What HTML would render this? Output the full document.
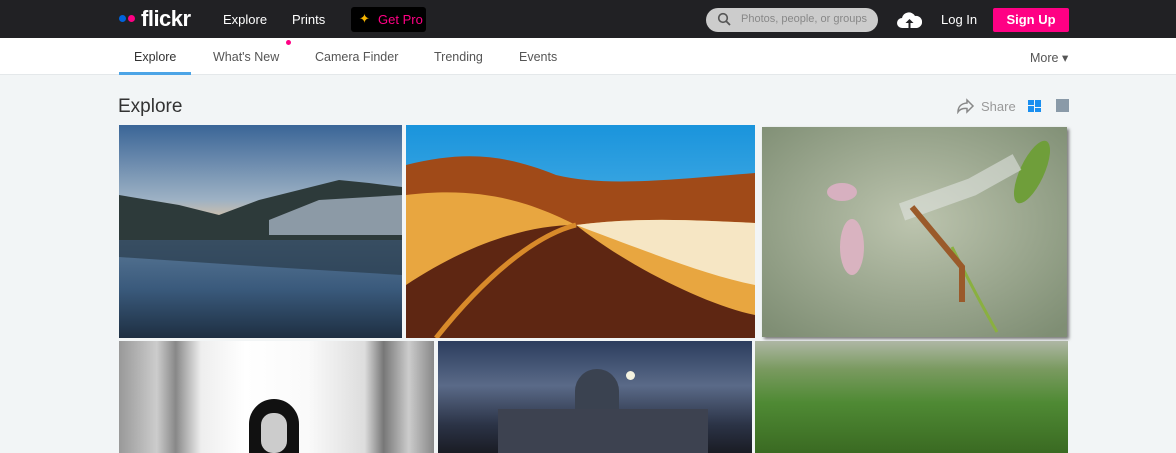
<!DOCTYPE html>
<html><head><style>
*{margin:0;padding:0;box-sizing:border-box}
body{width:1176px;height:453px;overflow:hidden;background:#f2f5f6;font-family:"Liberation Sans",sans-serif;position:relative}
.top{position:absolute;left:0;top:0;width:1176px;height:38px;background:#212124}
.sub{position:absolute;left:0;top:38px;width:1176px;height:37px;background:#fff;border-bottom:1px solid #e4e8ea}
.a{position:absolute;white-space:nowrap}
.ph{position:absolute;overflow:hidden}
</style></head><body>
<div class="top">
 <div class="a" style="left:119px;top:15px;width:7px;height:7px;border-radius:50%;background:#0063dc"></div>
 <div class="a" style="left:128px;top:15px;width:7px;height:7px;border-radius:50%;background:#ff0084"></div>
 <div class="a" style="left:141px;top:6px;color:#fff;font-weight:bold;font-size:22px;letter-spacing:-0.5px">flickr</div>
 <div class="a" style="left:223px;top:12px;color:#fff;font-size:13px">Explore</div>
 <div class="a" style="left:292px;top:12px;color:#fff;font-size:13px">Prints</div>
 <div class="a" style="left:351px;top:7px;width:75px;height:25px;background:#000;border-radius:3px"></div>
 <div class="a" style="left:359px;top:11px;color:#f5b400;font-size:13px">✦</div>
 <div class="a" style="left:378px;top:12px;color:#ff0084;font-size:13px">Get Pro</div>
 <div class="a" style="left:706px;top:8px;width:172px;height:24px;background:#ccc;border-radius:12px"></div>
 <svg class="a" style="left:717px;top:12px" width="14" height="14" viewBox="0 0 14 14"><circle cx="6" cy="6" r="4.3" fill="none" stroke="#555" stroke-width="1.6"/><path d="M9 9l4 4" stroke="#555" stroke-width="1.8"/></svg>
 <div class="a" style="left:741px;top:13px;color:#888;font-size:11px">Photos, people, or groups</div>
 <svg class="a" style="left:897px;top:10px" width="25" height="20" viewBox="0 0 25 20"><path d="M5 18a5 5 0 0 1 0-10 7 7 0 0 1 13-2 6 6 0 0 1 2 12z" fill="#fff"/><path d="M12.5 9l-4 4h3v5h2v-5h3z" fill="#212124"/></svg>
 <div class="a" style="left:941px;top:12px;color:#fff;font-size:13px">Log In</div>
 <div class="a" style="left:993px;top:8px;width:76px;height:24px;background:#ff0084;border-radius:2px;color:#fff;font-size:13px;font-weight:bold;text-align:center;line-height:24px">Sign Up</div>
</div>
<div class="sub">
 <div class="a" style="left:134px;top:12px;color:#333;font-size:12.5px">Explore</div>
 <div class="a" style="left:119px;top:34px;width:72px;height:3px;background:#4ca4e6"></div>
 <div class="a" style="left:213px;top:12px;color:#555;font-size:12.5px">What's New</div>
 <div class="a" style="left:286px;top:2px;width:5px;height:5px;border-radius:50%;background:#ff0084"></div>
 <div class="a" style="left:315px;top:12px;color:#555;font-size:12.5px">Camera Finder</div>
 <div class="a" style="left:434px;top:12px;color:#555;font-size:12.5px">Trending</div>
 <div class="a" style="left:519px;top:12px;color:#555;font-size:12.5px">Events</div>
 <div class="a" style="left:1030px;top:12px;color:#555;font-size:12.5px">More ▾</div>
</div>
<div class="a" style="left:118px;top:96px;color:#333;font-size:19px">Explore</div>
<svg class="a" style="left:957px;top:98px" width="18" height="16" viewBox="0 0 18 16"><path d="M10 2l6 6-6 6v-3.5C6 10 3 11 1 14c0-5 3-8.5 9-9z" fill="none" stroke="#888" stroke-width="1.5"/></svg>
<div class="a" style="left:981px;top:99px;color:#999;font-size:13px">Share</div>
<div class="a" style="left:1028px;top:100px;width:6px;height:5px;background:#1a8ff0"></div>
<div class="a" style="left:1035px;top:100px;width:6px;height:7px;background:#1a8ff0"></div>
<div class="a" style="left:1028px;top:106px;width:6px;height:6px;background:#1a8ff0"></div>
<div class="a" style="left:1035px;top:108px;width:6px;height:4px;background:#1a8ff0"></div>
<div class="a" style="left:1056px;top:99px;width:13px;height:13px;background:#8a9aa8"></div>

<svg class="ph" style="left:119px;top:125px" width="283" height="213" viewBox="0 0 283 213">
 <defs><linearGradient id="s1" x1="0" y1="0" x2="0" y2="1"><stop offset="0" stop-color="#3a6597"/><stop offset="0.35" stop-color="#9db1c4"/><stop offset="0.45" stop-color="#d8c3a8"/></linearGradient>
 <linearGradient id="w1" x1="0" y1="0" x2="0" y2="1"><stop offset="0" stop-color="#5a7896"/><stop offset="0.5" stop-color="#3a5a7c"/><stop offset="1" stop-color="#1e2f42"/></linearGradient></defs>
 <rect width="283" height="213" fill="url(#s1)"/>
 <path d="M0 70 L60 80 L100 90 L140 75 L180 65 L220 55 L250 58 L283 62 L283 120 L0 120Z" fill="#2d3a3a"/>
 <path d="M150 95 L200 75 L283 70 L283 110 L150 110Z" fill="#8c9aa6"/>
 <rect y="115" width="283" height="98" fill="url(#w1)"/>
 <path d="M0 115 L283 115 L283 150 L200 145 L120 140 L0 132Z" fill="#2a3c4c" opacity="0.7"/>
</svg>
<svg class="ph" style="left:406px;top:125px" width="349" height="213" viewBox="0 0 349 213">
 <defs><linearGradient id="s2" x1="0" y1="0" x2="0" y2="1"><stop offset="0" stop-color="#1a94dc"/><stop offset="1" stop-color="#7ccbee"/></linearGradient></defs>
 <rect width="349" height="213" fill="url(#s2)"/>
 <path d="M0 40 C60 25 100 30 150 50 C200 62 260 55 349 48 L349 213 L0 213Z" fill="#a04a18"/>
 <path d="M0 70 C80 60 130 80 170 100 C230 92 290 95 349 98 L349 213 L0 213Z" fill="#e8a640"/>
 <path d="M170 100 C230 92 290 95 349 98 L349 160 C300 150 250 130 170 100Z" fill="#f6e6c4"/>
 <path d="M0 213 L0 160 C60 120 120 100 170 100 C220 140 300 180 349 190 L349 213Z" fill="#5e2612"/>
 <path d="M30 213 C80 150 130 110 170 100" stroke="#d88a2a" stroke-width="5" fill="none"/>
</svg>
<svg class="ph" style="left:762px;top:127px;box-shadow:2px 2px 3px #777" width="305" height="210" viewBox="0 0 305 210">
 <defs><radialGradient id="g3" cx="0.5" cy="0.45" r="0.7"><stop offset="0" stop-color="#bcc4ae"/><stop offset="1" stop-color="#7f8e74"/></radialGradient></defs>
 <rect width="305" height="210" fill="url(#g3)"/>
 <path d="M190 120 Q215 170 235 205" stroke="#8ab040" stroke-width="3" fill="none"/>
 <ellipse cx="270" cy="45" rx="12" ry="34" fill="#6f9e3a" transform="rotate(25 270 45)"/>
 <path d="M140 85 L210 60 L255 35" stroke="#dfe3e0" stroke-width="18" opacity="0.6" fill="none"/>
 <path d="M150 80 L200 140 L200 175" stroke="#9a5a2a" stroke-width="6" fill="none"/>
 <ellipse cx="90" cy="120" rx="12" ry="28" fill="#d9b3c0"/>
 <ellipse cx="80" cy="65" rx="15" ry="9" fill="#d7b0c0"/>
</svg>
<div class="ph" style="left:119px;top:341px;width:315px;height:112px;background:linear-gradient(90deg,#999 0%,#ccc 12%,#888 18%,#eee 26%,#fff 40%,#fafafa 60%,#ddd 78%,#777 84%,#ccc 92%,#888 100%)"><div style="position:absolute;left:130px;top:58px;width:50px;height:60px;border-radius:25px 25px 0 0;background:#111"></div><div style="position:absolute;left:142px;top:72px;width:26px;height:40px;border-radius:12px;background:#ccc"></div></div>
<div class="ph" style="left:438px;top:341px;width:314px;height:112px;background:linear-gradient(180deg,#2c3d5e 0%,#5a6a88 40%,#2b3346 75%,#1a1c24 100%)"><div style="position:absolute;left:137px;top:28px;width:44px;height:40px;border-radius:22px 22px 0 0;background:#3a4250"></div><div style="position:absolute;left:60px;top:68px;width:210px;height:50px;background:#3d4250"></div><div style="position:absolute;left:188px;top:30px;width:9px;height:9px;border-radius:50%;background:#f4f2e0"></div></div>
<div class="ph" style="left:755px;top:341px;width:313px;height:112px;background:linear-gradient(180deg,#aeb7a4 0%,#7a9a60 25%,#4f8a34 55%,#3a6a22 100%)"></div>
</body></html>
